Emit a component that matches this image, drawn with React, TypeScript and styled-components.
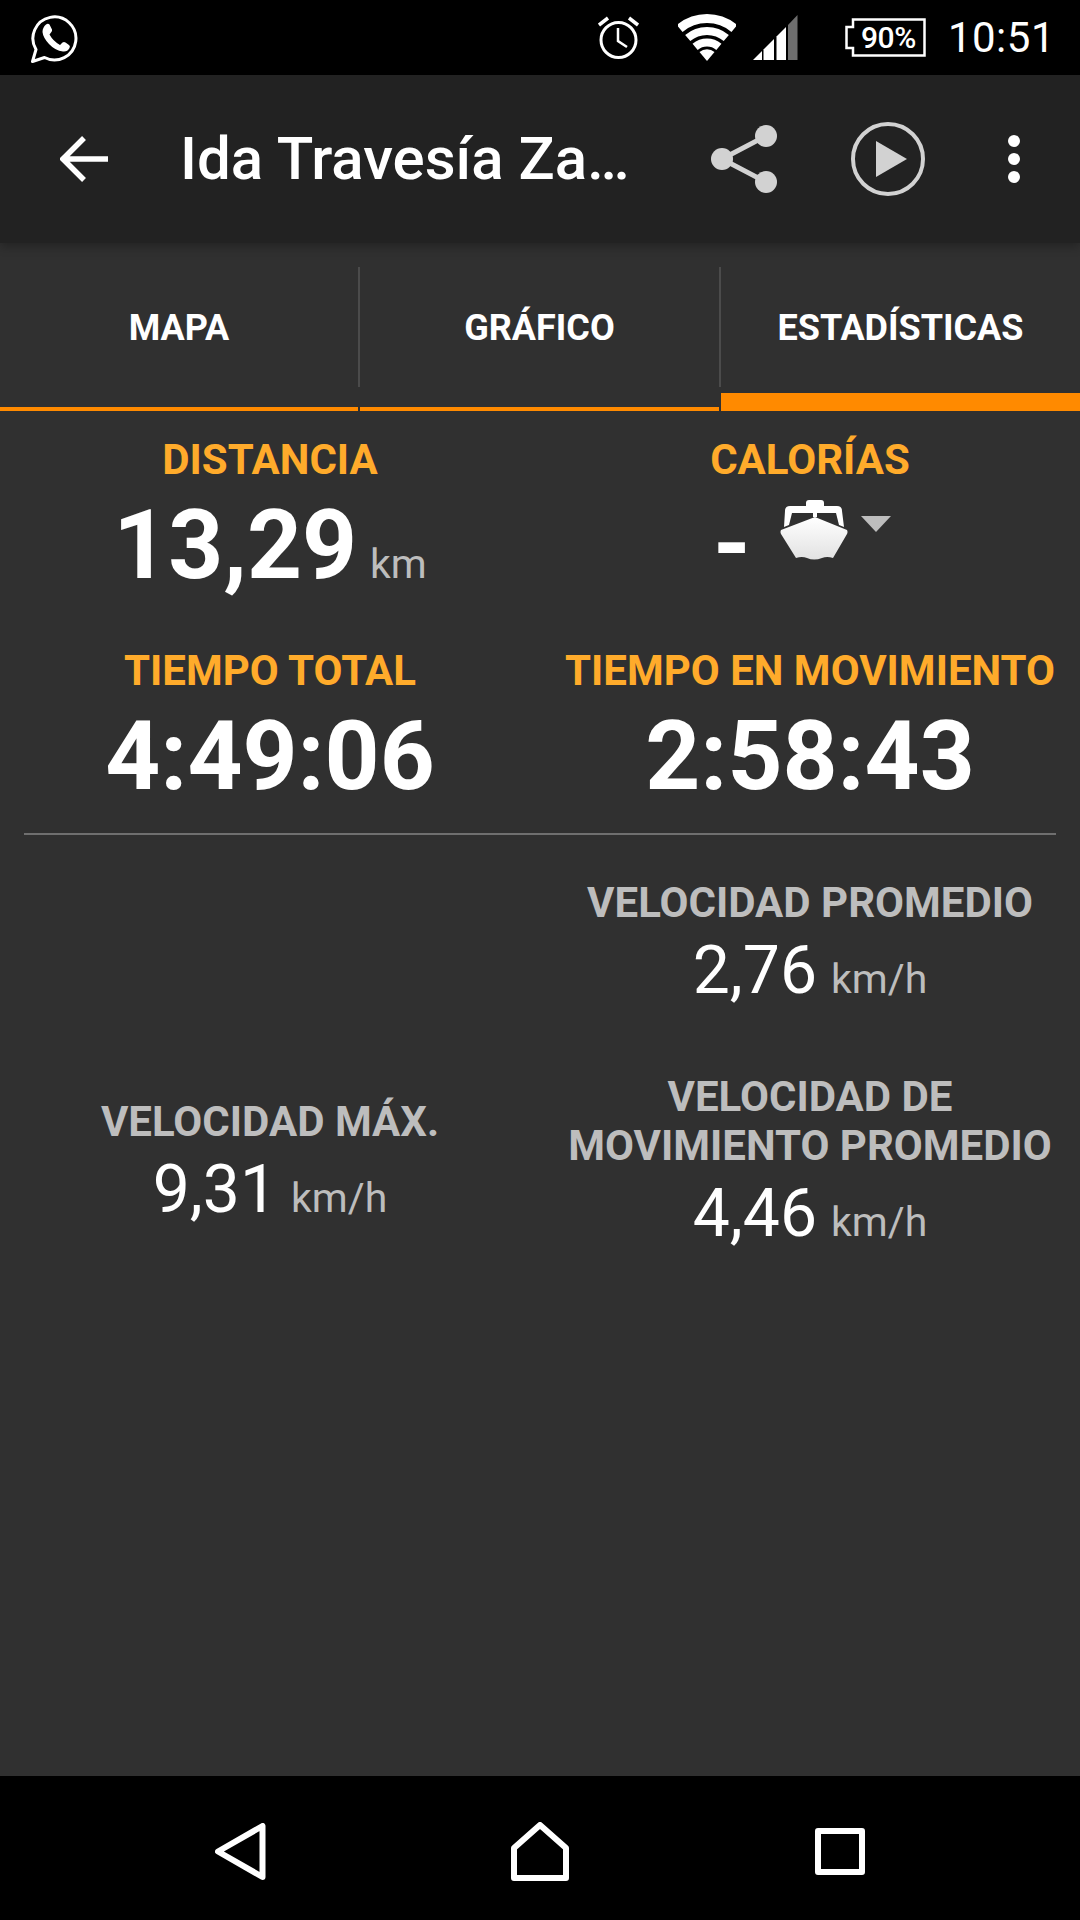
import React from "react";
import styled, { createGlobalStyle } from "styled-components";

const Global = createGlobalStyle`
  html, body { margin: 0; padding: 0; background: #303030; }
  * { box-sizing: border-box; }
`;
const Page = styled.div`
  width: 1080px; height: 1920px; display: flex; flex-direction: column;
  background: #303030; color: #fff; font-family: Roboto, "Liberation Sans", sans-serif; overflow: hidden;
`;
const StatusBar = styled.div`
  height: 75px; background: #000; display: flex; align-items: center; flex: none; padding: 0 25px 0 31px;
`;
const StatusRight = styled.div`
  margin-left: auto; display: flex; align-items: center;
`;
const Clock = styled.span`
  font-size: 42px; line-height: 75px; letter-spacing: 0.5px; margin-left: 22px;
`;
const Battery = styled.div`
  position: relative; width: 81px; height: 39px; margin-left: 47px; display: flex; align-items: center; justify-content: center;
  font-size: 30px; font-weight: 500; padding-left: 6px;
  svg { position: absolute; left: 0; top: 0; }
`;
const BatteryText = styled.span`
  position: relative; letter-spacing: -0.5px;
`;
const AppBar = styled.div`
  height: 168px; flex: none; background: #222; display: flex; align-items: center; position: relative;
  box-shadow: 0 3px 10px rgba(0,0,0,0.3); padding-left: 60px;
`;
const Title = styled.div`
  font-size: 60px; font-weight: 500; margin-left: 72px; width: 448px; white-space: nowrap; line-height: 70px;
`;
const ActionIcon = styled.svg<{ $ml: number }>`
  margin-left: ${p => p.$ml}px; flex: none; display: block;
`;
const Tabs = styled.div`
  display: grid; grid-template-columns: 358px 2px 359px 2px 359px; height: 168px; flex: none;
`;
const Tab = styled.div`
  display: flex; flex-direction: column; padding-top: 24px;
`;
const TabLabel = styled.div`
  height: 122px; display: flex; align-items: center; justify-content: center; font-size: 36px; font-weight: 700;
`;
const Indicator = styled.div<{ $active?: boolean }>`
  margin-top: auto; height: ${p => (p.$active ? 18 : 4)}px; background: #ff8a00;
`;
const TabDivider = styled.div`
  height: 120px; margin-top: 24px; background: #4b4b4b;
`;
const Main = styled.div`
  flex: 1; display: flex; flex-direction: column;
`;
const Grid = styled.div`
  display: grid; grid-template-columns: 1fr 1fr; padding-top: 26px; row-gap: 30px;
`;
const Cell = styled.div`
  display: flex; flex-direction: column; align-items: center; text-align: center;
`;
const MainLabel = styled.div`
  font-size: 42px; font-weight: 700; line-height: 46px; color: #ffab2b; white-space: nowrap;
`;
const BigValue = styled.div`
  font-size: 96px; font-weight: 700; line-height: 108px; margin-top: 8px; white-space: nowrap; display: flex; align-items: baseline;
`;
const BigUnit = styled.span`
  font-size: 41px; font-weight: 400; color: #bdbdbd; margin-left: 13px;
`;
const DashRow = styled.div`
  display: flex; height: 116px; align-items: flex-start; white-space: nowrap; padding-right: 16px;
`;
const Dash = styled.span`
  font-size: 96px; font-weight: 700; line-height: 108px; margin-top: 7px;
`;
const BoatIcon = styled.svg`
  margin: 17px 0 0 29px; display: block;
`;
const Caret = styled.svg`
  margin: 33px 0 0 13px; display: block;
`;
const Rule = styled.div`
  height: 2px; background: #6f6f6f; margin: 23px 24px 0;
`;
const SpeedGrid = styled.div`
  display: grid; grid-template-columns: 1fr 1fr; grid-template-rows: auto auto; padding-top: 43px; row-gap: 56px; align-items: center;
`;
const SpeedLabel = styled.div`
  font-size: 42px; font-weight: 700; line-height: 49px; color: #bdbdbd; white-space: nowrap;
`;
const SpeedValue = styled.div`
  font-size: 66px; line-height: 74px; margin-top: 7px; display: flex; align-items: baseline; white-space: nowrap;
`;
const SpeedUnit = styled.span`
  font-size: 41px; color: #bdbdbd; margin-left: 14px;
`;
const NavBar = styled.div`
  height: 144px; background: #000; flex: none; display: flex; align-items: center;
  padding-left: 215px; padding-top: 6px;
`;
const NavIcon = styled.svg<{ $ml?: number }>`
  margin-left: ${p => p.$ml ?? 0}px; display: block; flex: none;
`;
const StatusIcon = styled.svg<{ $ml?: number }>`
  margin-left: ${p => p.$ml ?? 0}px; display: block; flex: none;
`;

const arc = (r: number) => {
  const a = (40 * Math.PI) / 180, cx = 29, cy = 47;
  const s = Math.sin(a) * r, c = Math.cos(a) * r;
  return `M${cx - s} ${cy - c}A${r} ${r} 0 0 1 ${cx + s} ${cy - c}`;
};

const Alarm = () => (
  <StatusIcon width="41" height="43" viewBox="0 0 41 43">
    <circle cx="20.5" cy="24" r="17.5" fill="none" stroke="#fff" strokeWidth="3" />
    <path d="M20 12v13l9 6" fill="none" stroke="#fff" strokeWidth="2.5" />
    <path d="M1 9l9-7M40 9l-9-7" stroke="#fff" strokeWidth="3.5" />
  </StatusIcon>
);
const Wifi = () => (
  <StatusIcon $ml={39} width="58" height="47" viewBox="0 0 58 47">
    <path d="M29 47L21.5 38A12 12 0 0 1 36.5 38Z" fill="#fff" />
    <path d={arc(18.5)} fill="none" stroke="#fff" strokeWidth="8" />
    <path d={arc(30)} fill="none" stroke="#fff" strokeWidth="8" />
    <path d={arc(42.5)} fill="none" stroke="#fff" strokeWidth="9" />
  </StatusIcon>
);
const Signal = () => (
  <StatusIcon $ml={17} width="45" height="45" viewBox="0 0 45 45">
    <path d="M0 45L9 36V45Z" fill="#fff" />
    <path d="M10.5 34.5L21 24V45H10.5Z" fill="#fff" />
    <path d="M23.5 21.5L33 12V45H23.5Z" fill="#fff" />
    <path d="M35 10L44.5 0V45H35Z" fill="#6e6e6e" />
  </StatusIcon>
);
const WhatsApp = () => (
  <StatusIcon width="48" height="50" viewBox="0 0 48 50">
    <path d="M1.5 48.5L5 36.5A21.5 21.5 0 1 1 13.5 44.5Z" fill="none" stroke="#fff" strokeWidth="3" strokeLinejoin="round" />
    <path d="M15 11.5Q17 10 18.5 11.5L21 16.5Q21.5 18 20 19.5L18.5 21.5Q22 28 29 32L31.5 29.5Q33 28.5 34.5 29.5L38 32Q39.5 33 38.5 35Q36.5 39 32 38.5Q24 37.5 18 31Q12 24.5 11.5 19Q11.5 14.5 15 11.5Z" fill="#fff" />
  </StatusIcon>
);

export default function App() {
  return (
    <Page>
      <Global />
      <StatusBar>
        <WhatsApp />
        <StatusRight>
          <Alarm />
          <Wifi />
          <Signal />
          <Battery>
            <svg width="81" height="39" viewBox="0 0 81 39">
              <path d="M8 1.5H79.5V37.5H8V30H1.5V9H8Z" fill="none" stroke="#fff" strokeWidth="2.5" />
            </svg>
            <BatteryText>90%</BatteryText>
          </Battery>
          <Clock>10:51</Clock>
        </StatusRight>
      </StatusBar>
      <AppBar>
        <svg width="48" height="48" viewBox="0 0 48 48">
          <path d="M48 24H4M24 3L3 24l21 21" fill="none" stroke="#fff" strokeWidth="5.5" />
        </svg>
        <Title>Ida Travesía Za…</Title>
        <ActionIcon $ml={83} width="66" height="68" viewBox="0 0 66 68">
          <path d="M55 11L11 34l44 23" fill="none" stroke="#d2d2d2" strokeWidth="5" />
          <circle cx="55" cy="11" r="11" fill="#d2d2d2" />
          <circle cx="11" cy="34" r="11" fill="#d2d2d2" />
          <circle cx="55" cy="57" r="11" fill="#d2d2d2" />
        </ActionIcon>
        <ActionIcon $ml={74} width="74" height="74" viewBox="0 0 74 74">
          <circle cx="37" cy="37" r="35" fill="none" stroke="#d2d2d2" strokeWidth="4" />
          <path d="M25 19V55L56 37Z" fill="#d2d2d2" />
        </ActionIcon>
        <ActionIcon $ml={83} width="12" height="48" viewBox="0 0 12 48">
          <circle cx="6" cy="6" r="6" fill="#fff" />
          <circle cx="6" cy="24" r="6" fill="#fff" />
          <circle cx="6" cy="42" r="6" fill="#fff" />
        </ActionIcon>
      </AppBar>
      <Main>
        <Tabs>
          <Tab><TabLabel>MAPA</TabLabel><Indicator /></Tab>
          <TabDivider />
          <Tab><TabLabel>GRÁFICO</TabLabel><Indicator /></Tab>
          <TabDivider />
          <Tab><TabLabel>ESTADÍSTICAS</TabLabel><Indicator $active /></Tab>
        </Tabs>
        <Grid>
          <Cell>
            <MainLabel>DISTANCIA</MainLabel>
            <BigValue>13,29<BigUnit>km</BigUnit></BigValue>
          </Cell>
          <Cell>
            <MainLabel>CALORÍAS</MainLabel>
            <DashRow>
              <Dash>-</Dash>
              <BoatIcon width="68" height="60" viewBox="0 0 68 60">
                <defs>
                  <linearGradient id="hull" x1="0" y1="0" x2="0" y2="1">
                    <stop offset="0" stopColor="#ffffff" />
                    <stop offset="1" stopColor="#e2e2e2" />
                  </linearGradient>
                </defs>
                <path d="M26 6V3Q26 0 29 0H41Q44 0 44 3V6H57Q62 6 62 11L64 27L59 25L56 13H37V17H33V13H12L9 25L4 27L5 11Q5 6 10 6Z" fill="#fff" />
                <path d="M35 17L67 30Q68 32 67 34L53 58Q47 56 42 58Q34 61 27 58Q22 56 16 58L1 34Q0 32 1 30Z" fill="url(#hull)" />
              </BoatIcon>
              <Caret width="30" height="16" viewBox="0 0 30 16">
                <path d="M0 0H30L15 16Z" fill="#bdbdbd" />
              </Caret>
            </DashRow>
          </Cell>
          <Cell>
            <MainLabel>TIEMPO TOTAL</MainLabel>
            <BigValue>4:49:06</BigValue>
          </Cell>
          <Cell>
            <MainLabel>TIEMPO EN MOVIMIENTO</MainLabel>
            <BigValue>2:58:43</BigValue>
          </Cell>
        </Grid>
        <Rule />
        <SpeedGrid>
          <div />
          <Cell>
            <SpeedLabel>VELOCIDAD PROMEDIO</SpeedLabel>
            <SpeedValue>2,76<SpeedUnit>km/h</SpeedUnit></SpeedValue>
          </Cell>
          <Cell>
            <SpeedLabel>VELOCIDAD MÁX.</SpeedLabel>
            <SpeedValue>9,31<SpeedUnit>km/h</SpeedUnit></SpeedValue>
          </Cell>
          <Cell>
            <SpeedLabel>VELOCIDAD DE<br />MOVIMIENTO PROMEDIO</SpeedLabel>
            <SpeedValue>4,46<SpeedUnit>km/h</SpeedUnit></SpeedValue>
          </Cell>
        </SpeedGrid>
      </Main>
      <NavBar>
        <NavIcon width="52" height="57" viewBox="0 0 52 57">
          <path d="M47.5 3V54L3 28.5Z" fill="none" stroke="#fff" strokeWidth="6" strokeLinejoin="round" />
        </NavIcon>
        <NavIcon $ml={244} width="58" height="59" viewBox="0 0 58 59">
          <path d="M29 3L55 26V56H3V26Z" fill="none" stroke="#fff" strokeWidth="6" strokeLinejoin="round" />
        </NavIcon>
        <NavIcon $ml={246} width="50" height="47" viewBox="0 0 50 47">
          <rect x="3" y="3" width="44" height="41" fill="none" stroke="#fff" strokeWidth="6" strokeLinejoin="round" />
        </NavIcon>
      </NavBar>
    </Page>
  );
}
